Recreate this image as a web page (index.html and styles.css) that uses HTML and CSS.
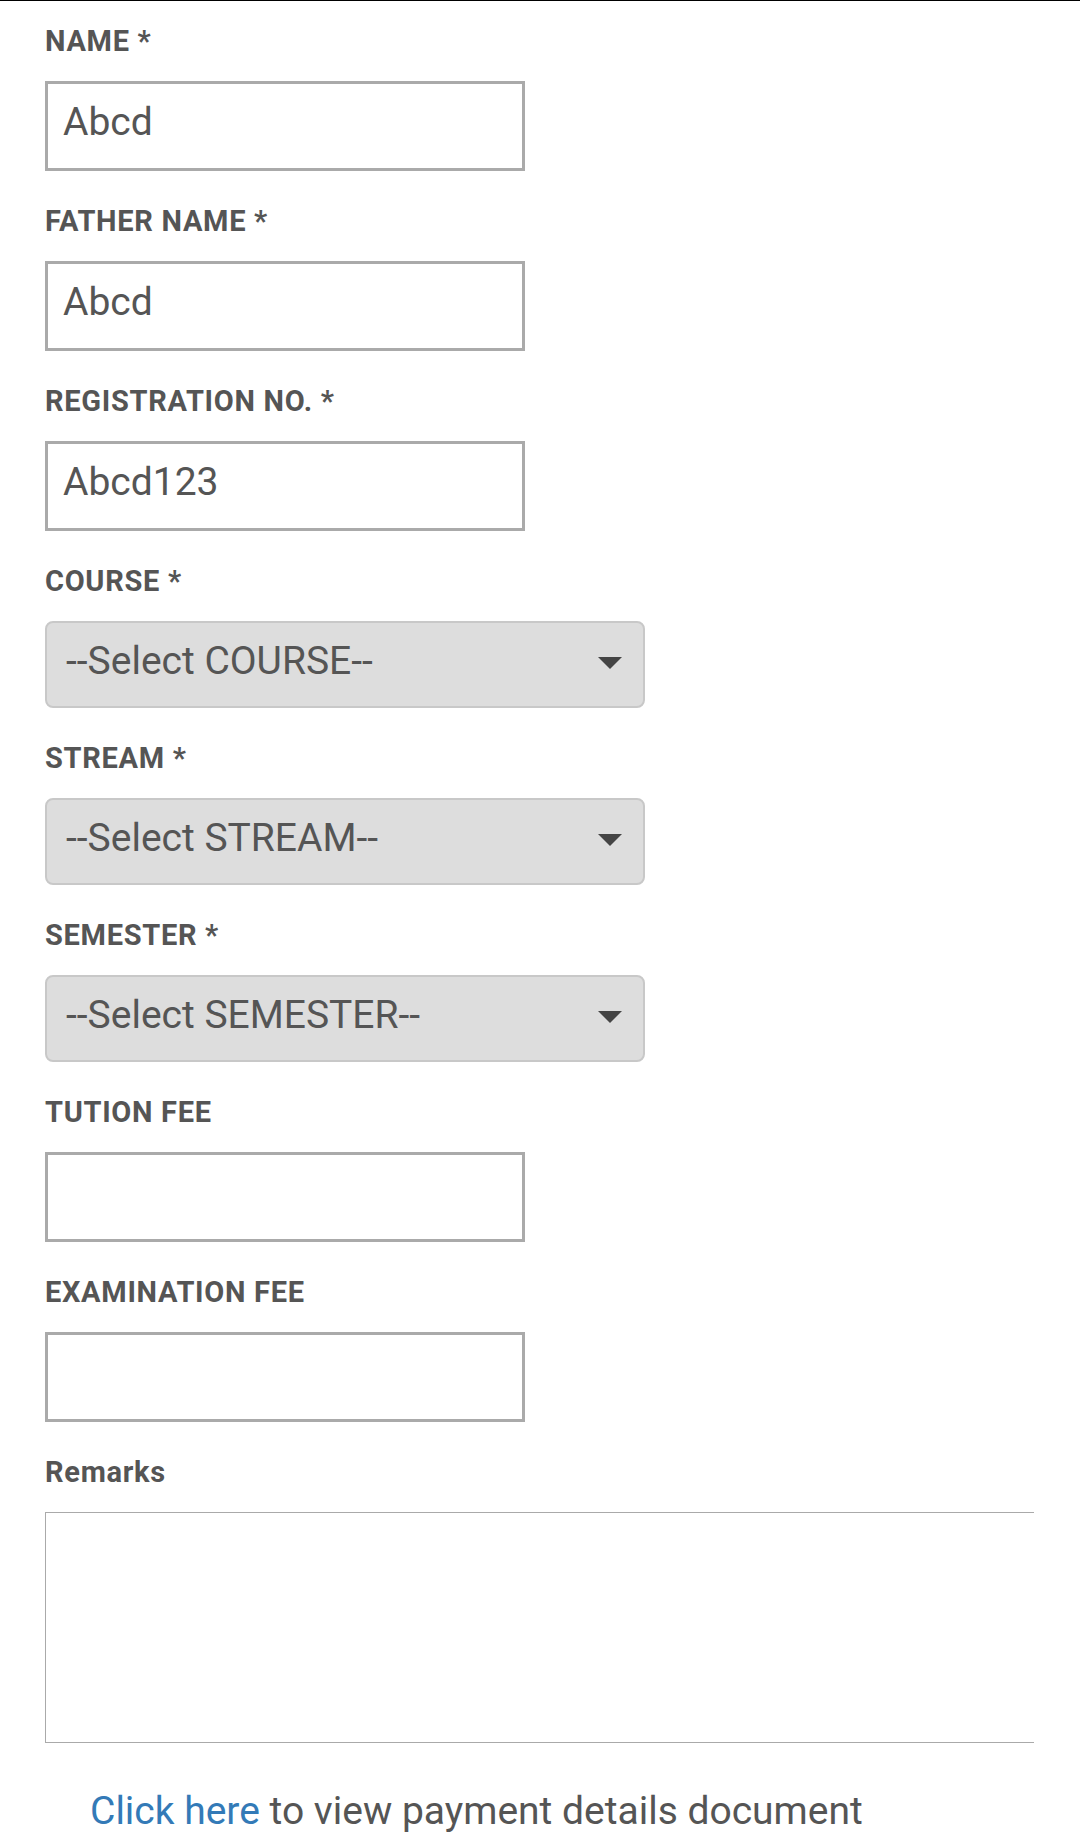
FILE: index.html
```html
<!DOCTYPE html>
<html lang="en">
<head>
<meta charset="utf-8">
<title>Fee Form</title>
<link rel="stylesheet" href="styles.css">
</head>
<body>
<form class="form">
  <div class="group">
    <label class="lbl">NAME *</label>
    <input class="field" type="text" value="Abcd">
  </div>
  <div class="group">
    <label class="lbl">FATHER NAME *</label>
    <input class="field" type="text" value="Abcd">
  </div>
  <div class="group">
    <label class="lbl">REGISTRATION NO. *</label>
    <input class="field" type="text" value="Abcd123">
  </div>
  <div class="group">
    <label class="lbl">COURSE *</label>
    <div class="select-wrap">
      <select class="select"><option>--Select COURSE--</option></select>
    </div>
  </div>
  <div class="group">
    <label class="lbl">STREAM *</label>
    <div class="select-wrap">
      <select class="select"><option>--Select STREAM--</option></select>
    </div>
  </div>
  <div class="group">
    <label class="lbl">SEMESTER *</label>
    <div class="select-wrap">
      <select class="select"><option>--Select SEMESTER--</option></select>
    </div>
  </div>
  <div class="group">
    <label class="lbl">TUTION FEE</label>
    <input class="field" type="text" value="">
  </div>
  <div class="group">
    <label class="lbl">EXAMINATION FEE</label>
    <input class="field" type="text" value="">
  </div>
  <div class="group group-last">
    <label class="lbl">Remarks</label>
    <div class="remarks-wrap">
      <textarea class="remarks"></textarea>
    </div>
  </div>
  <p class="doc-note"><a class="doc-link" href="#">Click here</a> to view payment details document</p>
</form>
</body>
</html>
```

FILE: styles.css
```css
html, body {
  background: #fff;
}
body {
  margin: 0;
  border-top: 1px solid #000;
  font-family: Roboto, "Noto Sans", "Liberation Sans", sans-serif;
  color: #555;
  overflow: hidden;
}
.form {
  padding: 21px 0 0 45px;
  margin: 0;
}
.group {
  margin-bottom: 31px;
}
.group-last {
  margin-bottom: 0;
}
.lbl {
  display: block;
  font-size: 29px;
  line-height: 38px;
  font-weight: 700;
  letter-spacing: 0.7px;
  color: #555;
  margin-bottom: 21px;
}
.field {
  display: block;
  box-sizing: border-box;
  width: 480px;
  height: 90px;
  margin: 0;
  border: 3px solid #aaa;
  border-radius: 0;
  padding: 0 15px 8px;
  font-family: Roboto, "Noto Sans", sans-serif;
  font-size: 39px;
  color: #555;
  background: #fff;
  outline: none;
}
.select-wrap {
  position: relative;
  width: 600px;
}
.select-wrap::after {
  content: "";
  position: absolute;
  right: 23px;
  top: 36px;
  border-left: 12px solid transparent;
  border-right: 12px solid transparent;
  border-top: 12px solid #444;
  pointer-events: none;
}
.select {
  -webkit-appearance: none;
  appearance: none;
  display: block;
  box-sizing: border-box;
  width: 600px;
  height: 87px;
  margin: 0;
  border: 2px solid #c8c8c8;
  border-radius: 8px;
  background: #ddd;
  padding: 0 60px 7px 19px;
  font-family: Roboto, "Noto Sans", sans-serif;
  font-size: 39px;
  color: #555;
  outline: none;
}
.remarks-wrap {
  width: 989px;
  overflow: hidden;
}
.remarks {
  display: block;
  box-sizing: border-box;
  width: 1100px;
  height: 231px;
  margin: 0;
  border: 1px solid #aaa;
  border-radius: 0;
  padding: 10px 16px;
  font-family: Roboto, "Noto Sans", sans-serif;
  font-size: 39px;
  color: #555;
  background: #fff;
  resize: none;
  outline: none;
}
.doc-note {
  margin: 40px 0 0;
  padding-left: 45px;
  font-size: 39px;
  line-height: 56px;
  color: #555;
}
.doc-link {
  color: #337ab7;
  text-decoration: none;
}
```
